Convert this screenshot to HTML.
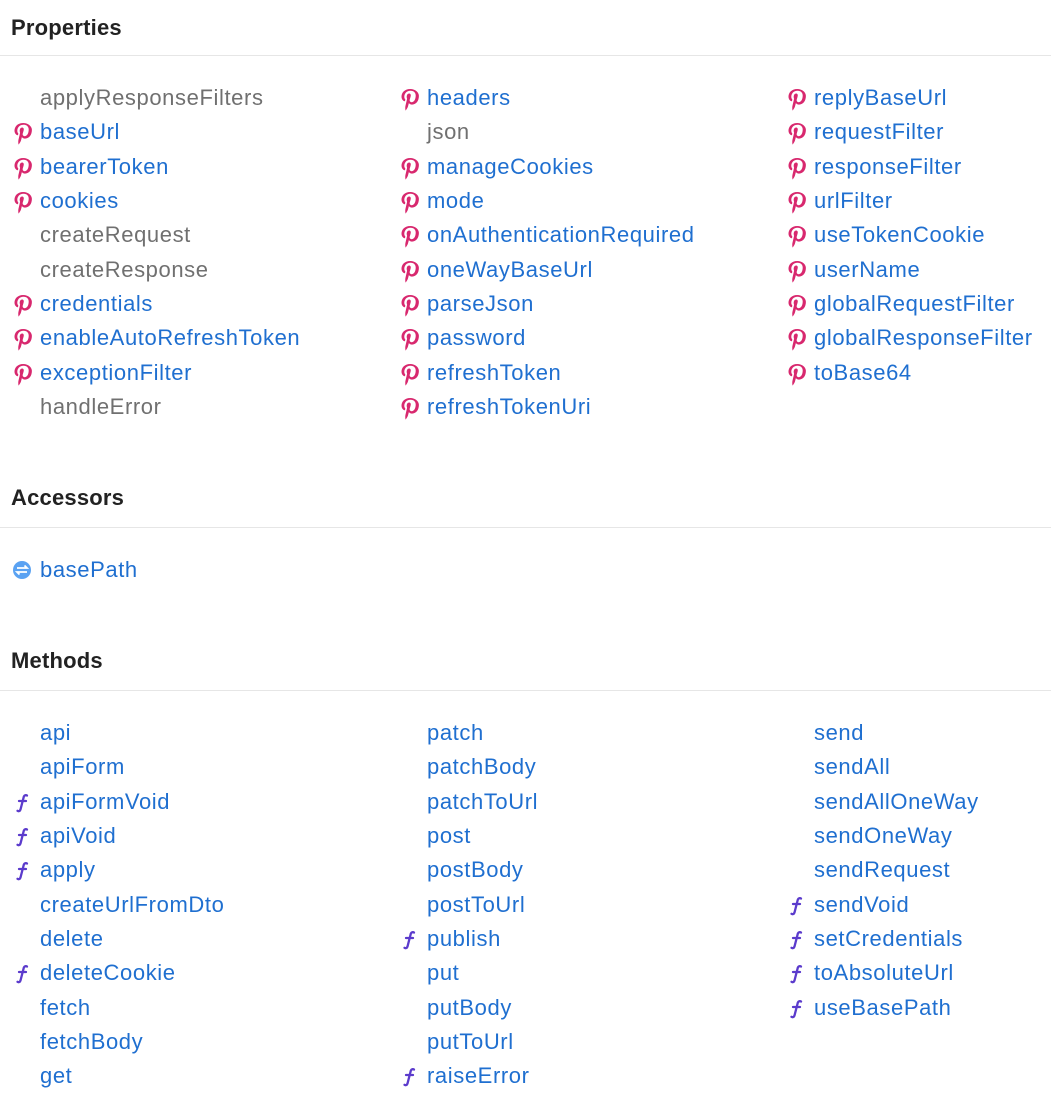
<!DOCTYPE html>
<html><head><meta charset="utf-8"><style>
body{margin:0;width:1051px;height:1102px;background:#fff;font-family:"Liberation Sans",sans-serif;position:relative;overflow:hidden}
h2{position:absolute;left:11px;margin:0;font-size:22px;font-weight:bold;color:#222;line-height:28px;letter-spacing:0.2px}
.hr{position:absolute;left:0;width:1051px;height:1px;background:#e6e6e6}
.col{position:absolute;font-size:22px;line-height:34.35px;letter-spacing:0.6px}
.col div{position:relative;height:34.35px;white-space:nowrap;color:#1f6fd0}
.col div.g{color:#707070}
.col svg{position:absolute;left:-29px;top:6px}
</style></head><body>
<svg width="0" height="0" style="position:absolute"><defs>
<symbol id="p" viewBox="0 0 24 24"><path d="M12.2 2C6.8 2 3.5 5.6 3.5 9.6c0 2.4 1.3 4 2.9 4.6.3.1.5 0 .6-.3l.3-1c.1-.3 0-.5-.2-.7-.5-.6-.8-1.5-.8-2.5 0-3.2 2.4-6 6.2-6 3.4 0 5.2 2.1 5.2 4.8 0 3.6-1.6 6.7-4 6.7-1.3 0-2.3-1.1-2-2.4.4-1.6 1.1-3.3 1.1-4.4 0-1-.5-1.9-1.7-1.9-1.3 0-2.4 1.4-2.4 3.3 0 1.2.4 2 .4 2l-1.6 6.8c-.5 2-.1 4.4 0 4.7 0 .1.2.2.3.1.1-.2 1.7-2.1 2.2-4 .2-.6.9-3.4.9-3.4.4.8 1.7 1.6 3.1 1.6 4.1 0 6.9-3.7 6.9-8.7C20.9 5.4 17.3 2 12.2 2z" fill="#d8286e"/></symbol>
<symbol id="f" viewBox="0 0 24 24"><path d="M16 4.5c-1-.6-2.6-.4-3.2 1.2L9.5 18.5c-.5 1.7-2 2-3 1.3M8 10h7" stroke="#5b3bcc" stroke-width="2.3" fill="none" stroke-linecap="round"/></symbol>
</defs></svg>

<h2 style="top:14px">Properties</h2><div class="hr" style="top:55px"></div>
<div class="col" style="left:40px;top:81px">
<div class="g">applyResponseFilters</div>
<div><svg width="24" height="24"><use href="#p"/></svg>baseUrl</div>
<div><svg width="24" height="24"><use href="#p"/></svg>bearerToken</div>
<div><svg width="24" height="24"><use href="#p"/></svg>cookies</div>
<div class="g">createRequest</div>
<div class="g">createResponse</div>
<div><svg width="24" height="24"><use href="#p"/></svg>credentials</div>
<div><svg width="24" height="24"><use href="#p"/></svg>enableAutoRefreshToken</div>
<div><svg width="24" height="24"><use href="#p"/></svg>exceptionFilter</div>
<div class="g">handleError</div>
</div>
<div class="col" style="left:427px;top:81px">
<div><svg width="24" height="24"><use href="#p"/></svg>headers</div>
<div class="g">json</div>
<div><svg width="24" height="24"><use href="#p"/></svg>manageCookies</div>
<div><svg width="24" height="24"><use href="#p"/></svg>mode</div>
<div><svg width="24" height="24"><use href="#p"/></svg>onAuthenticationRequired</div>
<div><svg width="24" height="24"><use href="#p"/></svg>oneWayBaseUrl</div>
<div><svg width="24" height="24"><use href="#p"/></svg>parseJson</div>
<div><svg width="24" height="24"><use href="#p"/></svg>password</div>
<div><svg width="24" height="24"><use href="#p"/></svg>refreshToken</div>
<div><svg width="24" height="24"><use href="#p"/></svg>refreshTokenUri</div>
</div>
<div class="col" style="left:814px;top:81px">
<div><svg width="24" height="24"><use href="#p"/></svg>replyBaseUrl</div>
<div><svg width="24" height="24"><use href="#p"/></svg>requestFilter</div>
<div><svg width="24" height="24"><use href="#p"/></svg>responseFilter</div>
<div><svg width="24" height="24"><use href="#p"/></svg>urlFilter</div>
<div><svg width="24" height="24"><use href="#p"/></svg>useTokenCookie</div>
<div><svg width="24" height="24"><use href="#p"/></svg>userName</div>
<div><svg width="24" height="24"><use href="#p"/></svg>globalRequestFilter</div>
<div><svg width="24" height="24"><use href="#p"/></svg>globalResponseFilter</div>
<div><svg width="24" height="24"><use href="#p"/></svg>toBase64</div>
</div>

<h2 style="top:484px">Accessors</h2><div class="hr" style="top:527px"></div>
<div class="col" style="left:40px;top:553px">
<div><svg width="24" height="24" style="left:-28px"><circle cx="10" cy="11" r="9" fill="#5aa2f2"/><path d="M5 9h10l-2.5-2.5M15 13H5l2.5 2.5" stroke="#fff" stroke-width="1.8" fill="none"/></svg>basePath</div>
</div>

<h2 style="top:647px">Methods</h2><div class="hr" style="top:690px"></div>
<div class="col" style="left:40px;top:716px">
<div>api</div><div>apiForm</div>
<div><svg width="24" height="24"><use href="#f"/></svg>apiFormVoid</div>
<div><svg width="24" height="24"><use href="#f"/></svg>apiVoid</div>
<div><svg width="24" height="24"><use href="#f"/></svg>apply</div>
<div>createUrlFromDto</div><div>delete</div>
<div><svg width="24" height="24"><use href="#f"/></svg>deleteCookie</div>
<div>fetch</div><div>fetchBody</div><div>get</div>
</div>
<div class="col" style="left:427px;top:716px">
<div>patch</div><div>patchBody</div><div>patchToUrl</div><div>post</div><div>postBody</div><div>postToUrl</div>
<div><svg width="24" height="24"><use href="#f"/></svg>publish</div>
<div>put</div><div>putBody</div><div>putToUrl</div>
<div><svg width="24" height="24"><use href="#f"/></svg>raiseError</div>
</div>
<div class="col" style="left:814px;top:716px">
<div>send</div><div>sendAll</div><div>sendAllOneWay</div><div>sendOneWay</div><div>sendRequest</div>
<div><svg width="24" height="24"><use href="#f"/></svg>sendVoid</div>
<div><svg width="24" height="24"><use href="#f"/></svg>setCredentials</div>
<div><svg width="24" height="24"><use href="#f"/></svg>toAbsoluteUrl</div>
<div><svg width="24" height="24"><use href="#f"/></svg>useBasePath</div>
</div>
</body></html>
